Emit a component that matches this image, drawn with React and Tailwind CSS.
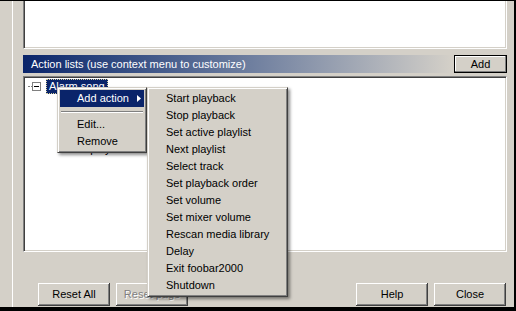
import React from "react";

const btn3d =
  "bg-[#d4d0c8] shadow-[inset_-1px_-1px_0_#404040,inset_1px_1px_0_#ffffff,inset_-2px_-2px_0_#808080,inset_2px_2px_0_#d4d0c8]";
const sunken =
  "bg-white border-l border-t border-l-[#808080] border-t-[#808080] border-r border-b border-r-white border-b-white shadow-[inset_1px_1px_0_#404040,inset_-1px_-1px_0_#d4d0c8]";
const menuBox =
  "absolute bg-[#d4d0c8] border border-t-[#d4d0c8] border-l-[#d4d0c8] border-r-[#404040] border-b-[#404040] p-[2px] shadow-[inset_1px_1px_0_#ffffff,inset_-1px_-1px_0_#808080,2px_2px_3px_rgba(0,0,0,0.45)]";

function Button({ children, disabled, className = "" }) {
  return (
    <div
      className={`w-[72px] h-[23px] flex items-center justify-center ${btn3d} ${className}`}
    >
      {disabled ? (
        <span className="text-[#808080] [text-shadow:1px_1px_0_#ffffff]">{children}</span>
      ) : (
        <span className="text-black">{children}</span>
      )}
    </div>
  );
}

const subItems = [
  "Start playback",
  "Stop playback",
  "Set active playlist",
  "Next playlist",
  "Select track",
  "Set playback order",
  "Set volume",
  "Set mixer volume",
  "Rescan media library",
  "Delay",
  "Exit foobar2000",
  "Shutdown",
];

export default function App() {
  return (
    <div className="relative w-[516px] h-[311px] overflow-hidden bg-[#d4d0c8] border-t border-r-2 border-b-4 border-black flex font-['Liberation_Sans',Arial,sans-serif] text-[11px] leading-none select-none">
      <div className="w-[12px] shrink-0" />
      <div className="w-px shrink-0 bg-white" />
      <div className="flex-1 flex flex-col pl-[10px] pr-[7px]">
        {/* top panel */}
        <div className="h-[48px] bg-white border-l border-l-[#808080] border-r border-b border-r-white border-b-white shadow-[inset_1px_0_0_#404040,inset_-1px_-1px_0_#d4d0c8]" />

        {/* header row */}
        <div className="mt-[6px] h-[18px] flex gap-[2px]">
          <div className="flex-1 h-full flex items-center pl-[8px] bg-gradient-to-r from-[#0a246a] to-[#d4d0c8] text-white">
            Action lists (use context menu to customize)
          </div>
          <div className="w-[53px] h-full border border-black">
            <div className="w-full h-full flex items-center justify-center bg-[#d4d0c8] shadow-[inset_-1px_-1px_0_#808080,inset_1px_1px_0_#ffffff] text-black">
              Add
            </div>
          </div>
        </div>

        {/* tree panel */}
        <div className={`mt-[3px] h-[176px] ${sunken} flex flex-col`}>
          <div className="mt-[2px] h-[15px] flex items-center">
            <div className="ml-[4px] w-[4px] border-t border-dotted border-[#808080]" />
            <div className="w-[9px] h-[9px] border border-[#808080] bg-white flex items-center justify-center">
              <div className="w-[5px] h-px bg-black" />
            </div>
            <div className="ml-[5px] h-[15px] px-[2px] flex items-center bg-[#0a246a] text-white border border-dotted border-[#d8d0a0]">
              Alarm song
            </div>
          </div>
          <div className="mt-[47px] h-[16px] flex items-center pl-[40px] text-black">
            Start playback
          </div>
        </div>

        <div className="flex-1" />

        {/* buttons */}
        <div className="h-[23px] mb-[1px] flex justify-between pl-[15px] pr-[1px]">
          <div className="flex gap-[6px]">
            <Button>Reset All</Button>
            <Button disabled>Reset page</Button>
          </div>
          <div className="flex gap-[6px]">
            <Button>Help</Button>
            <Button>Close</Button>
          </div>
        </div>
      </div>

      {/* context menu */}
      <div className={`${menuBox} top-[86px] left-[57px] w-[90px]`}>
        <div className="h-[17px] flex items-center justify-between pl-[17px] pr-[3px] bg-[#0a246a] text-white">
          <span>Add action</span>
          <svg width="4" height="7" viewBox="0 0 4 7">
            <polygon points="0,0 4,3.5 0,7" fill="#ffffff" />
          </svg>
        </div>
        <div className="h-[9px] flex flex-col justify-center px-[1px]">
          <div className="h-px bg-[#808080]" />
          <div className="h-px bg-white" />
        </div>
        <div className="h-[17px] flex items-center pl-[17px] text-black">Edit...</div>
        <div className="h-[17px] flex items-center pl-[17px] text-black">Remove</div>
      </div>

      {/* submenu */}
      <div className={`${menuBox} top-[86px] left-[147px] w-[141px]`}>
        {subItems.map((t) => (
          <div key={t} className="h-[17px] flex items-center pl-[16px] text-black">
            {t}
          </div>
        ))}
      </div>
    </div>
  );
}
